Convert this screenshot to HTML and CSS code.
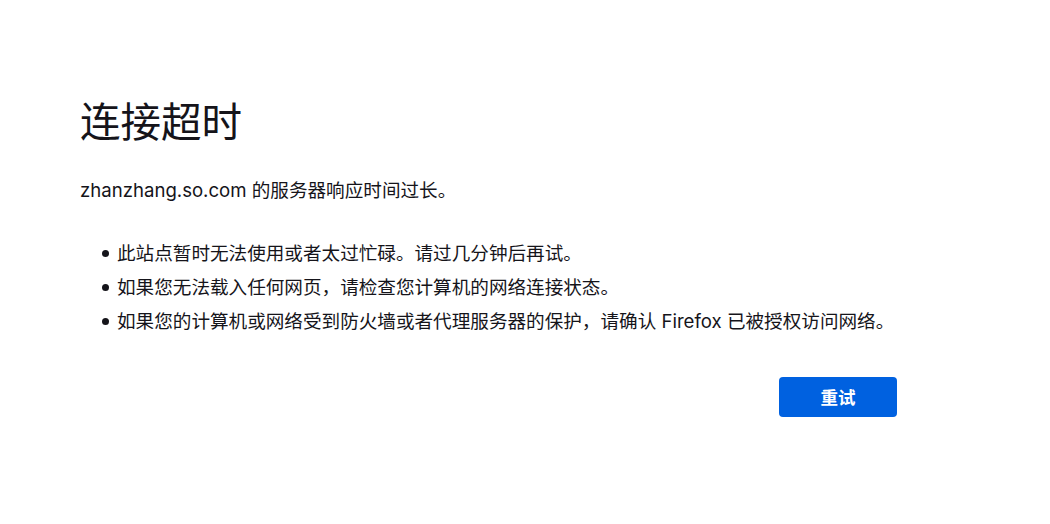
FILE: index.html
```html
<!DOCTYPE html>
<html lang="zh-CN">
<head>
<meta charset="utf-8">
<title>连接超时</title>
<link rel="stylesheet" href="styles.css">
</head>
<body>
<main class="container">
  <h1 class="title">连接超时</h1>
  <p class="desc">zhanzhang.so.com 的服务器响应时间过长。</p>
  <ul class="tips">
    <li>此站点暂时无法使用或者太过忙碌。请过几分钟后再试。</li>
    <li>如果您无法载入任何网页，请检查您计算机的网络连接状态。</li>
    <li>如果您的计算机或网络受到防火墙或者代理服务器的保护，请确认 Firefox 已被授权访问网络。</li>
  </ul>
  <div class="actions">
    <button class="retry">重试</button>
  </div>
</main>
</body>
</html>
```
FILE: styles.css
```css
html, body {
  margin: 0;
  padding: 0;
  background: #ffffff;
}
body {
  font-family: "Inter", "Noto Sans CJK SC", sans-serif;
  color: #15141a;
  font-size: 18.6px;
}
.container {
  width: 817px;
  margin-left: 80px;
  padding-top: 94px;
}
.title {
  margin: 0;
  font-family: "Noto Sans CJK SC", sans-serif;
  font-size: 40.5px;
  font-weight: 400;
  line-height: 52px;
}
.desc {
  margin: 31px 0 0;
  line-height: 27px;
}
.tips {
  list-style: none;
  margin: 32px 0 0;
  padding-left: 37px;
  line-height: 34.2px;
}
.tips li {
  position: relative;
  white-space: nowrap;
}
.tips li::before {
  content: "";
  position: absolute;
  left: -15px;
  top: 14px;
  width: 7px;
  height: 7px;
  border-radius: 50%;
  background: #15141a;
}
.actions {
  display: flex;
  justify-content: flex-end;
  margin-top: 38px;
}
.retry {
  width: 118px;
  height: 40px;
  border: none;
  border-radius: 4px;
  background: #0061e0;
  color: #ffffff;
  font-family: "Noto Sans CJK SC", sans-serif;
  font-size: 17.5px;
  font-weight: 700;
}
```
